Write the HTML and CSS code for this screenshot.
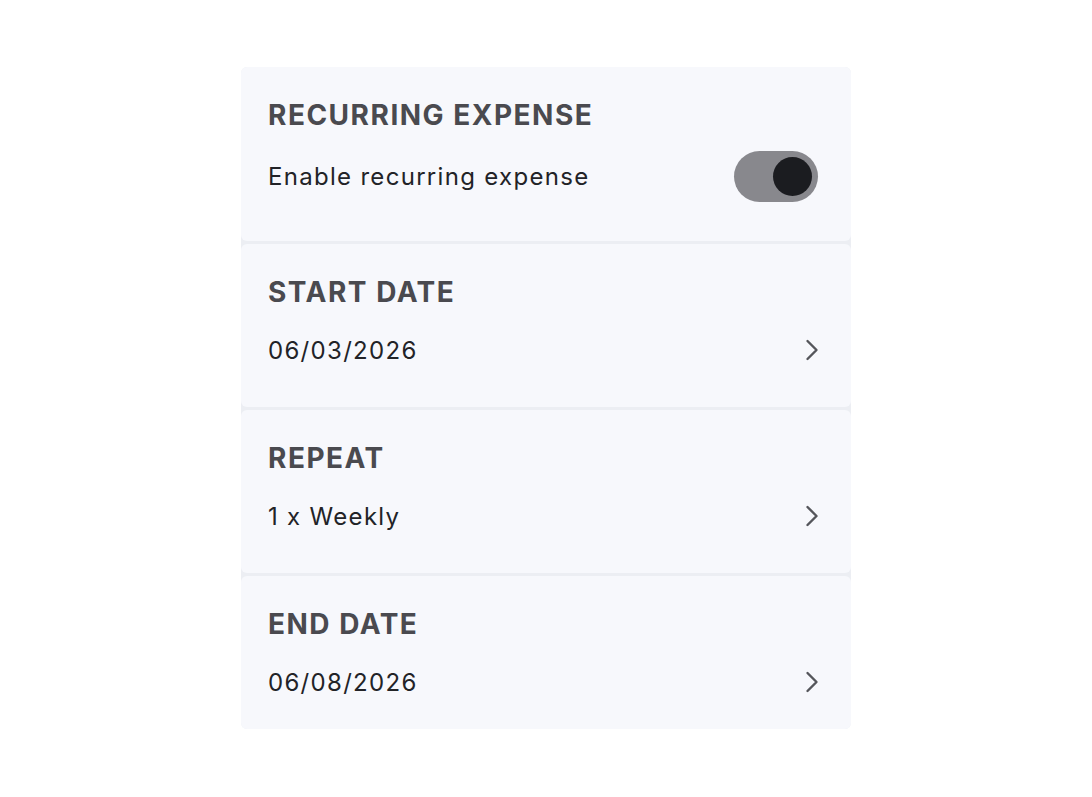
FILE: index.html
```html
<!DOCTYPE html>
<html>
<head>
<meta charset="utf-8">
<link rel="stylesheet" href="styles.css">
</head>
<body>
<div class="stack">
  <section class="card card-first">
    <h2 class="label">RECURRING EXPENSE</h2>
    <div class="row">
      <span class="value">Enable recurring expense</span>
      <span class="toggle"><span class="knob"></span></span>
    </div>
  </section>
  <section class="card">
    <h2 class="label">START DATE</h2>
    <div class="row">
      <span class="value">06/03/2026</span>
      <svg class="chev" width="14" height="22" viewBox="0 0 14 22"><path d="M2.5 2 L11.5 11 L2.5 20" fill="none" stroke="#55565b" stroke-width="2.4" stroke-linecap="round" stroke-linejoin="round"/></svg>
    </div>
  </section>
  <section class="card">
    <h2 class="label">REPEAT</h2>
    <div class="row">
      <span class="value">1 x Weekly</span>
      <svg class="chev" width="14" height="22" viewBox="0 0 14 22"><path d="M2.5 2 L11.5 11 L2.5 20" fill="none" stroke="#55565b" stroke-width="2.4" stroke-linecap="round" stroke-linejoin="round"/></svg>
    </div>
  </section>
  <section class="card card-last">
    <h2 class="label">END DATE</h2>
    <div class="row">
      <span class="value">06/08/2026</span>
      <svg class="chev" width="14" height="22" viewBox="0 0 14 22"><path d="M2.5 2 L11.5 11 L2.5 20" fill="none" stroke="#55565b" stroke-width="2.4" stroke-linecap="round" stroke-linejoin="round"/></svg>
    </div>
  </section>
</div>
</body>
</html>
```

FILE: styles.css
```css
html, body {
  margin: 0;
  padding: 0;
  background: #ffffff;
}
body {
  font-family: Inter, "Noto Sans", sans-serif;
}
.stack {
  width: 610px;
  margin: 67px 0 0 241px;
  display: flex;
  flex-direction: column;
  gap: 3px;
  background: #eceef3;
  border-radius: 6px;
}
.card {
  background: #f7f8fc;
  border-radius: 6px;
  padding: 31px 33px 0 27px;
  height: 132px;
}
.card-first {
  height: 143px;
}
.card-last {
  height: 122px;
}
.label {
  margin: 0;
  font-size: 28px;
  line-height: 34px;
  font-weight: 700;
  letter-spacing: 1.5px;
  color: #4a4a4f;
}
.row {
  display: flex;
  align-items: center;
  justify-content: space-between;
  margin-top: 24px;
  height: 34px;
}
.card-first .row {
  margin-top: 27px;
}
.value {
  font-size: 24px;
  letter-spacing: 1.3px;
  color: #222327;
}
.toggle {
  width: 84px;
  height: 51px;
  border-radius: 26px;
  background: #88888d;
  display: flex;
  align-items: center;
  justify-content: flex-end;
  padding-right: 6px;
  box-sizing: border-box;
}
.knob {
  width: 39px;
  height: 39px;
  border-radius: 50%;
  background: #1b1c20;
}
.chev {
  display: block;
  margin-right: -1px;
}
```
